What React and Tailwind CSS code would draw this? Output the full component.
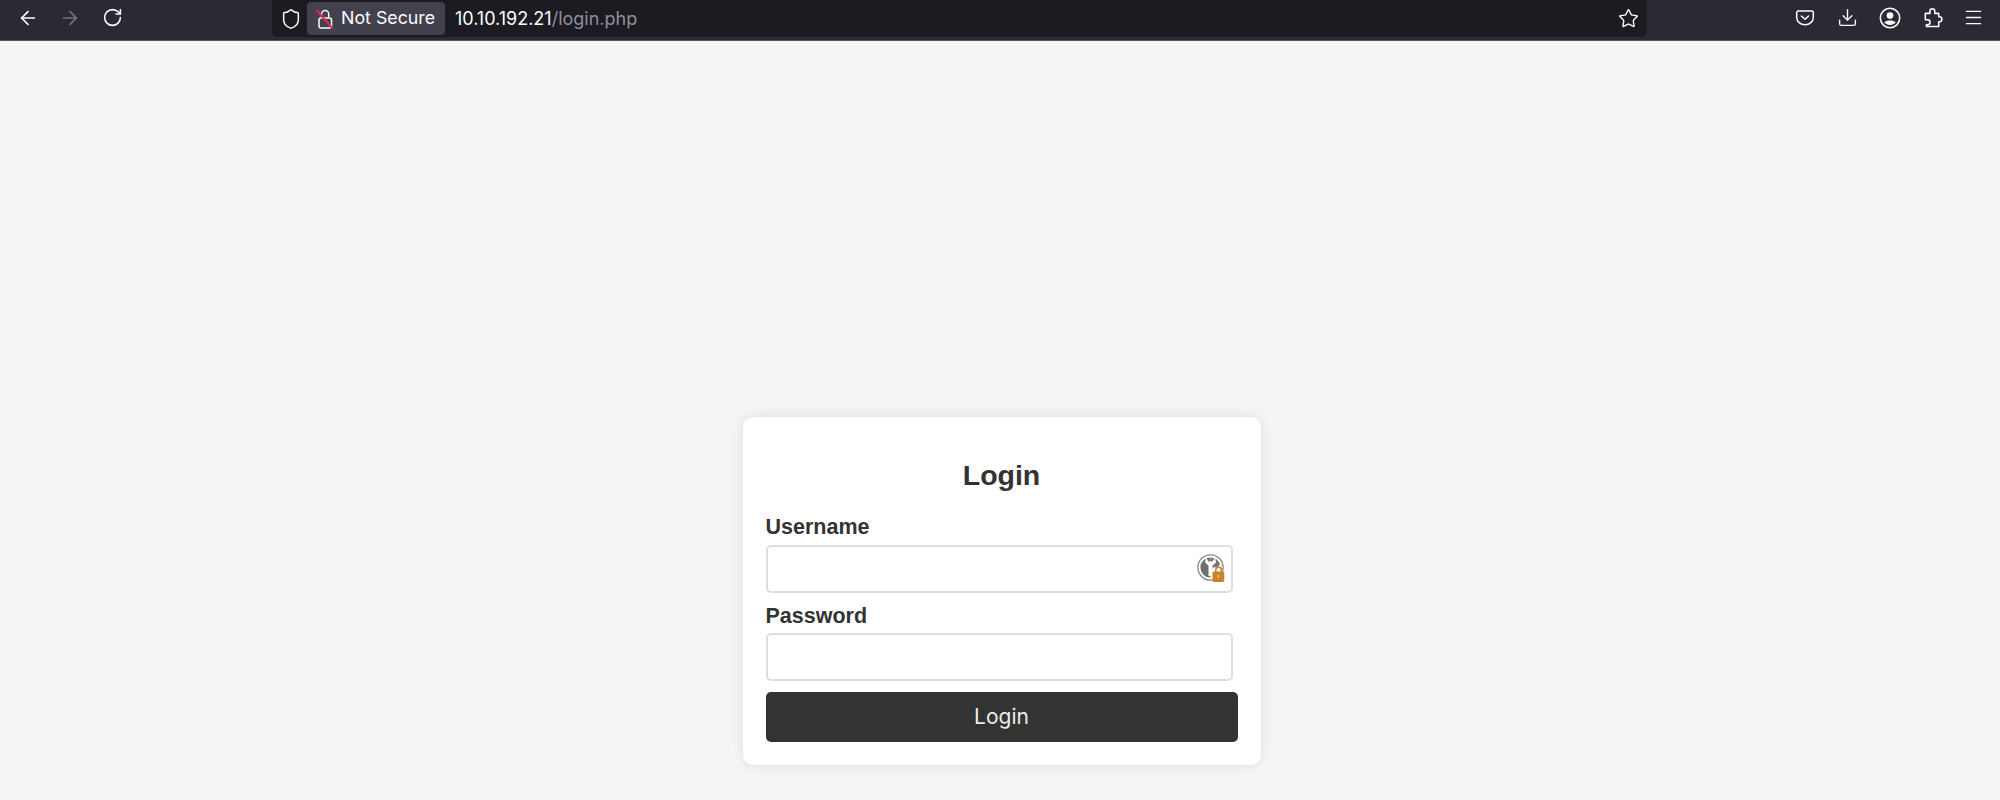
import { ArrowLeft, ArrowRight, RotateCw, Shield, Star, Download, Menu } from "lucide-react"

const PocketIcon = () => (
  <svg width="20" height="20" viewBox="0 0 20 20" fill="none" stroke="#fbfbfe" strokeWidth="1.5" strokeLinecap="round" strokeLinejoin="round">
    <path d="M3.2 3h13.6c.9 0 1.5.7 1.500 1.500v5c0 4.200-3.700 7.200-8.300 7.200s-8.300-3-8.300-7.200v-5C1.700 3.700 2.300 3 3.200 3z" />
    <path d="M6.400 8 10 11.200 13.600 8" />
  </svg>
)

const AccountIcon = () => (
  <svg width="22" height="22" viewBox="0 0 20 20" fill="none" stroke="#fbfbfe" strokeWidth="1.4">
    <circle cx="10" cy="10" r="8.800" />
    <circle cx="10" cy="7.800" r="3" fill="#fbfbfe" stroke="none" />
    <path d="M4.800 14.200c1.200-1.400 3-1.900 5.200-1.900s4 .5 5.200 1.900c-1.300 1.500-3.100 2.200-5.200 2.200s-3.900-.7-5.200-2.200z" fill="#fbfbfe" stroke="none" />
  </svg>
)

const PuzzleIcon = () => (
  <svg width="20" height="22" viewBox="0 0 18 20" fill="none" stroke="#fbfbfe" strokeWidth="1.4" strokeLinejoin="round">
    <path d="M2 5.800h4.200V3.800a2.200 2.200 0 0 1 4.400 0v2h3.600v3h.6a2.300 2.300 0 0 1 0 4.600h-.6v4.400H3v-1.600h1a2.300 2.300 0 0 0 0-4.600H2z" />
  </svg>
)

const NotSecureLock = () => (
  <svg width="18" height="22" viewBox="0 0 18 22" fill="none">
    <path d="M5.500 9V6a3.600 3.600 0 0 1 7.200 0v3" stroke="#fbfbfe" strokeWidth="1.500" />
    <rect x="3" y="10" width="12.500" height="10" rx="2" stroke="#fbfbfe" strokeWidth="1.500" />
    <path d="M0.500 2 16.500 20.500" stroke="#d92a52" strokeWidth="2" />
  </svg>
)

const ManagerIcon = () => (
  <svg width="29" height="29" viewBox="0 0 29 29" fill="none">
    <circle cx="13.500" cy="13.500" r="12.600" fill="#fff" stroke="#8c8c8c" strokeWidth="1.400" />
    <path d="M13.500 3.400A10.100 10.100 0 0 0 13.500 23.600z" fill="#6f6f6f" />
    <path d="M13.500 3.400A10.100 10.100 0 0 1 23 10l-3 4-3-1-3.500 4z" fill="#777" />
    <path d="M9 3.500 11.500 7.500 15.500 7.500 18 3.500 19 8.500 15.500 11.500 15.500 22 11.500 22 11.500 11.500 8 8.500z" fill="#fff" />
    <path d="M18.800 18.500v-2.600a2.800 2.800 0 0 1 5.600 0v2.600" stroke="#c98a2c" strokeWidth="1.600" />
    <rect x="15.500" y="17.500" width="11.800" height="10.500" rx="1.400" fill="#c9842a" />
    <rect x="20" y="21" width="2.600" height="2.600" fill="#e4b36b" />
  </svg>
)

export default function App() {
  return (
    <div className="h-[800px] overflow-hidden bg-[#f5f5f5] font-['Inter',sans-serif]">
      <div className="flex h-[41px] items-start border-b border-[#5a5a60] bg-[#2b2a33]">
        <div className="flex h-[35px] w-[272px] items-center pl-[17px]">
          <ArrowLeft size={22} strokeWidth={1.8} className="text-[#fbfbfe]" />
          <ArrowRight size={22} strokeWidth={1.8} className="ml-[20px] text-[#76757c]" />
          <RotateCw size={21} strokeWidth={1.8} className="ml-[21px] text-[#fbfbfe]" />
        </div>
        <div className="flex h-[37px] w-[1375px] items-center rounded-b-md bg-[#1c1b22] pr-[8px]">
          <Shield size={22} strokeWidth={1.6} className="ml-[8px] text-[#fbfbfe]" />
          <div className="ml-[5px] flex h-[33px] w-[138px] items-center rounded bg-[#42414d] pl-[9px] text-[18px] text-[#fbfbfe]">
            <NotSecureLock />
            <span className="ml-[7px] text-[17.800px]">Not Secure</span>
          </div>
          <div className="ml-[10px] text-[18px] text-[#fbfbfe]">
            10.10.192.21<span className="text-[#8f8f9d]">/login.php</span>
          </div>
          <Star size={21} strokeWidth={1.6} className="ml-auto text-[#fbfbfe]" />
        </div>
        <div className="flex h-[35px] flex-1 items-center pl-[148px]">
          <PocketIcon />
          <Download size={21} strokeWidth={1.6} className="ml-[22px] text-[#fbfbfe]" />
          <div className="ml-[21px]"><AccountIcon /></div>
          <div className="ml-[22px]"><PuzzleIcon /></div>
          <Menu size={21} strokeWidth={1.7} className="ml-[20px] text-[#fbfbfe]" />
        </div>
      </div>

      <div className="flex justify-center pl-[3px] pt-[376px]">
        <div className="h-[348px] w-[518px] rounded-[10px] bg-white px-[23px] pt-[40px] shadow-[0_0_13px_rgba(0,0,0,0.1)]">
          <h2 className="text-center font-['Liberation_Sans',sans-serif] text-[28.500px] font-bold leading-[36px] text-[#333]">Login</h2>
          <form className="mt-[21px]">
            <label className="block font-['Liberation_Sans',sans-serif] text-[21.500px] font-bold leading-[27px] text-[#333]">Username</label>
            <div className="relative mt-[4px] w-[467px]">
              <input type="text" className="block h-[48px] w-full rounded-[5px] border-2 border-[#dedede] bg-white" />
              <div className="absolute right-[7px] top-[9px]"><ManagerIcon /></div>
            </div>
            <label className="mt-[10px] block font-['Liberation_Sans',sans-serif] text-[21.500px] font-bold leading-[27px] text-[#333]">Password</label>
            <input type="password" className="mt-[3px] block h-[48px] w-[467px] rounded-[5px] border-2 border-[#dedede] bg-white" />
            <button type="button" className="mt-[11px] block h-[50px] w-[472px] rounded-[5px] bg-[#333] text-[21px] text-[#ececec]">Login</button>
          </form>
        </div>
      </div>
    </div>
  )
}
